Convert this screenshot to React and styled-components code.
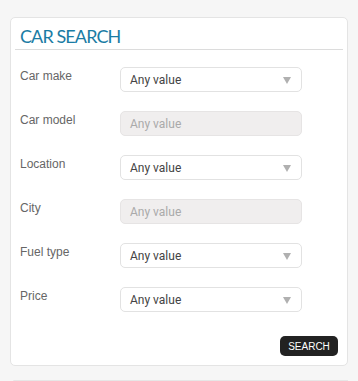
import styled, { createGlobalStyle } from 'styled-components';

const GlobalStyle = createGlobalStyle`
  body {
    margin: 0;
    background: #f6f6f6;
    font-family: "Liberation Sans", Arial, sans-serif;
  }
`;

const campos = [
  { etiqueta: 'Car make', activo: true },
  { etiqueta: 'Car model', activo: false },
  { etiqueta: 'Location', activo: true },
  { etiqueta: 'City', activo: false },
  { etiqueta: 'Fuel type', activo: true },
  { etiqueta: 'Price', activo: true },
];

const App = () => {
  return (
    <>
      <GlobalStyle />
      <Pagina>
        <Tarjeta>
          <Cabecera>
            <Titulo>CAR SEARCH</Titulo>
          </Cabecera>

          <Formulario>
            {campos.map((campo) => (
              <Fila key={campo.etiqueta}>
                <Etiqueta>{campo.etiqueta}</Etiqueta>
                <Selector $activo={campo.activo}>
                  <span>Any value</span>
                  {campo.activo && <Flecha />}
                </Selector>
              </Fila>
            ))}
          </Formulario>

          <Acciones>
            <Boton>SEARCH</Boton>
          </Acciones>
        </Tarjeta>
        <TarjetaSiguiente />
      </Pagina>
    </>
  );
};

export default App;

const Pagina = styled.div`
  padding: 17px 10px 0 10px;
  height: 364px;
  overflow: hidden;
`;

const Tarjeta = styled.div`
  box-sizing: border-box;
  width: 338px;
  height: 349px;
  background: #fff;
  border: 1px solid #e4e4e4;
  border-radius: 5px;
  padding: 0 4px;
  display: flex;
  flex-direction: column;
`;

const Cabecera = styled.div`
  border-bottom: 1px solid #dcdcdc;
  padding: 8px 0 3px 5px;
`;

const Titulo = styled.h2`
  margin: 0;
  font-family: Lato, "Open Sans", sans-serif;
  font-weight: 400;
  font-size: 18px;
  line-height: 20px;
  color: #1a7ca4;
  letter-spacing: -0.9px;
`;

const Formulario = styled.div`
  display: flex;
  flex-direction: column;
  gap: 19px;
  padding: 17px 0 0 5px;
`;

const Fila = styled.div`
  display: flex;
  align-items: flex-start;
`;

const Etiqueta = styled.div`
  width: 100px;
  font-size: 12px;
  line-height: 14px;
  padding-top: 2px;
  color: #666;
`;

const Selector = styled.div`
  box-sizing: border-box;
  width: 182px;
  height: 25px;
  border: 1px solid ${(p) => (p.$activo ? '#e2e2e2' : '#e6e4e4')};
  border-radius: 5px;
  background: ${(p) => (p.$activo ? '#fff' : '#f0eeee')};
  display: flex;
  align-items: center;
  justify-content: space-between;
  padding: 0 10px 0 9px;
  font-family: Roboto, "Liberation Sans", sans-serif;
  font-size: 12px;
  color: ${(p) => (p.$activo ? '#444' : '#aaa')};
`;

const Flecha = styled.span`
  width: 0;
  height: 0;
  border-left: 4px solid transparent;
  border-right: 4px solid transparent;
  border-top: 7px solid #b0b0b0;
  margin-top: 2px;
`;

const Acciones = styled.div`
  margin-top: auto;
  display: flex;
  justify-content: flex-end;
  padding: 0 5px 9px 0;
`;

const Boton = styled.button`
  height: 20px;
  width: 58px;
  border: none;
  border-radius: 5px;
  background: #222;
  color: #fff;
  font-family: "Liberation Sans", Arial, sans-serif;
  font-size: 10px;
  padding: 0;
  cursor: pointer;
`;

const TarjetaSiguiente = styled.div`
  margin: 14px 0 0 3px;
  height: 20px;
  background: #fff;
  border-top: 1px solid #e6e6e6;
  border-left: 1px solid #f0f0f0;
`;
